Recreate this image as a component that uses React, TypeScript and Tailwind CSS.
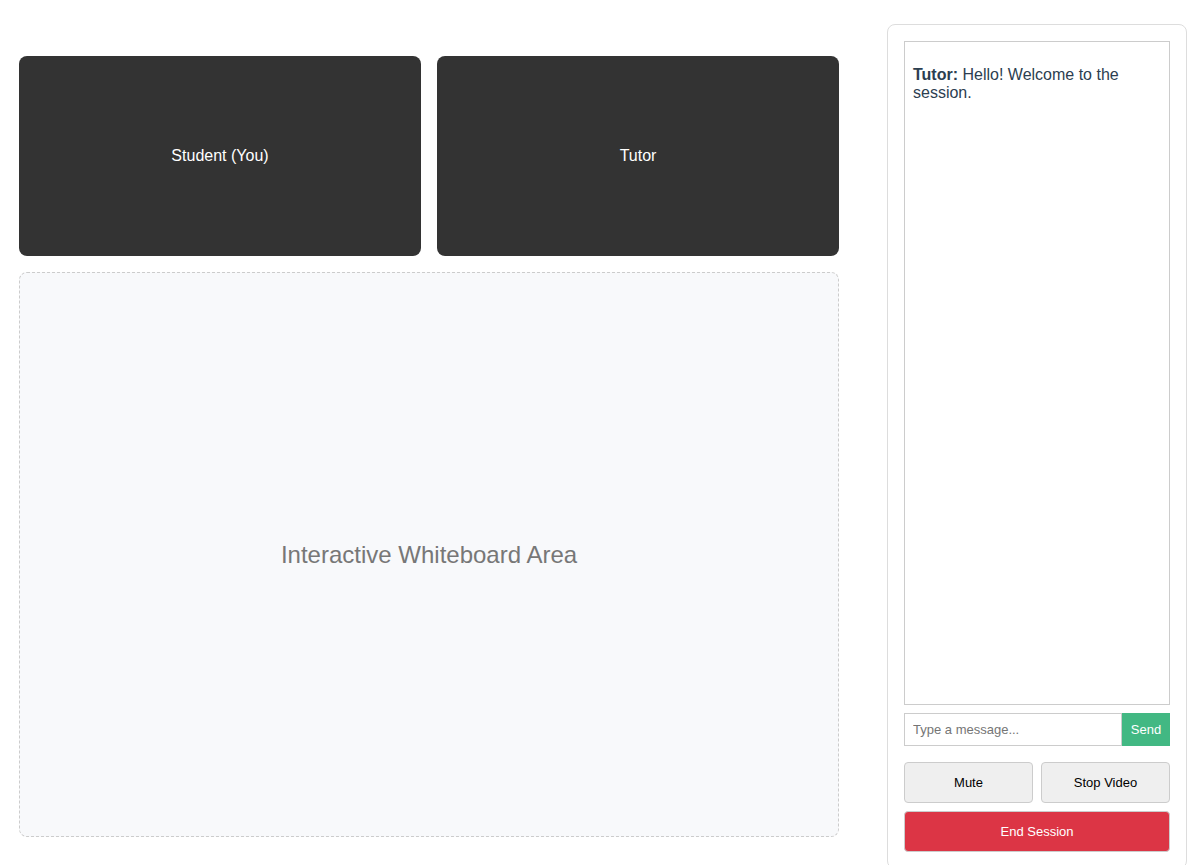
import { useState } from "react";
import type { FormEvent } from "react";

type Message = { sender: string; text: string };

function VideoTile({ label }: { label: string }) {
  return (
    <div className="flex h-[200px] flex-1 items-center justify-center rounded-lg bg-[#333333] text-white">
      {label}
    </div>
  );
}

function Whiteboard() {
  return (
    <section
      aria-label="Whiteboard"
      className="flex flex-1 items-center justify-center rounded-lg border border-dashed border-[#cccccc] bg-[#f8f9fb] text-2xl text-[#777777]"
    >
      Interactive Whiteboard Area
    </section>
  );
}

function Chat() {
  const [messages, setMessages] = useState<Message[]>([
    { sender: "Tutor", text: "Hello! Welcome to the session." },
  ]);
  const [draft, setDraft] = useState("");

  function send(event: FormEvent) {
    event.preventDefault();
    if (!draft.trim()) return;
    setMessages([...messages, { sender: "You", text: draft }]);
    setDraft("");
  }

  return (
    <>
      <div className="min-h-0 flex-1 overflow-y-auto border border-[#cccccc] px-2 py-6">
        {messages.map((message, index) => (
          <p key={index} className="mb-4">
            <strong>{message.sender}:</strong> {message.text}
          </p>
        ))}
      </div>
      <form onSubmit={send} className="mt-2 flex h-[33px] text-[13px]">
        <input
          type="text"
          aria-label="Message"
          placeholder="Type a message..."
          value={draft}
          onChange={(event) => setDraft(event.target.value)}
          className="min-w-0 flex-1 border border-[#cccccc] px-2 text-black placeholder:text-[#757575]"
        />
        <button type="submit" className="w-12 bg-[#42b883] text-white">
          Send
        </button>
      </form>
    </>
  );
}

function Controls() {
  const [muted, setMuted] = useState(false);
  const [videoOff, setVideoOff] = useState(false);

  return (
    <div className="mt-4 grid grid-cols-2 gap-2 text-[13px]">
      <button
        type="button"
        onClick={() => setMuted(!muted)}
        className="h-[41px] rounded-sm border border-[#cccccc] bg-[#efefef] text-black"
      >
        {muted ? "Unmute" : "Mute"}
      </button>
      <button
        type="button"
        onClick={() => setVideoOff(!videoOff)}
        className="h-[41px] rounded-sm border border-[#cccccc] bg-[#efefef] text-black"
      >
        {videoOff ? "Start Video" : "Stop Video"}
      </button>
      <button
        type="button"
        className="col-span-2 h-[41px] rounded-sm border border-[#cccccc] bg-[#dc3545] text-white"
      >
        End Session
      </button>
    </div>
  );
}

export default function App() {
  return (
    <div className="h-screen overflow-hidden bg-white pt-6 pr-2 font-['Liberation_Sans',Arial,sans-serif] text-base leading-[18px] text-[#2c3e50]">
      <div className="flex h-[calc(100vh-20px)] gap-4">
        <main className="flex min-w-0 flex-1 flex-col gap-4 py-8 pr-8 pl-[19px]">
          <div className="flex gap-4">
            <VideoTile label="Student (You)" />
            <VideoTile label="Tutor" />
          </div>
          <Whiteboard />
        </main>
        <aside className="flex w-[300px] shrink-0 flex-col rounded-lg border border-[#dddddd] p-4">
          <Chat />
          <Controls />
        </aside>
      </div>
    </div>
  );
}
